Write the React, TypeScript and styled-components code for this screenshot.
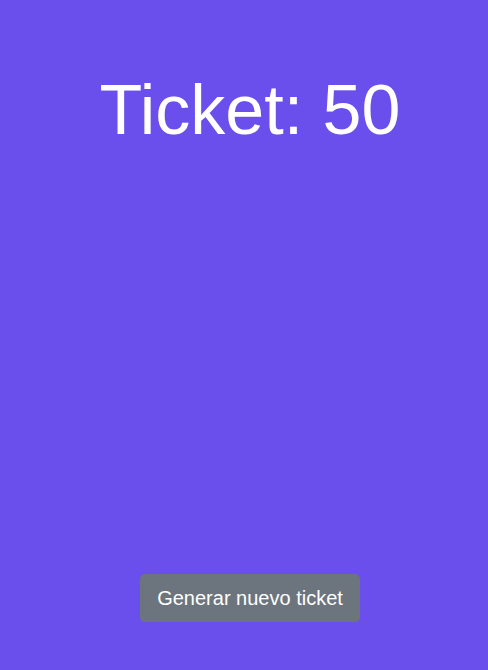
import React from "react";
import styled, { createGlobalStyle } from "styled-components";

const GlobalStyle = createGlobalStyle`
  html, body {
    margin: 0;
    padding: 0;
    background: #6a4fec;
    overflow: hidden;
  }
  * { box-sizing: border-box; }
`;

const Page = styled.main`
  height: 670px;
  display: flex;
  flex-direction: column;
  align-items: center;
  justify-content: space-between;
  padding: 71px 0 48px 12px;
  background: #6a4fec;
  font-family: "Liberation Sans", Arial, sans-serif;
  color: #fff;
`;

const Title = styled.h1`
  margin: 0;
  font-size: 70px;
  font-weight: 400;
  line-height: 78px;
`;

const Button = styled.button`
  font-family: "Liberation Sans", Arial, sans-serif;
  font-size: 20px;
  line-height: 30px;
  padding: 8px 16px;
  color: #fff;
  background: #6c757d;
  border: 1px solid #6c757d;
  border-radius: 4.8px;
  cursor: pointer;
`;

export default function App() {
  return (
    <>
      <GlobalStyle />
      <Page>
        <Title>Ticket: 50</Title>
        <Button>Generar nuevo ticket</Button>
      </Page>
    </>
  );
}
